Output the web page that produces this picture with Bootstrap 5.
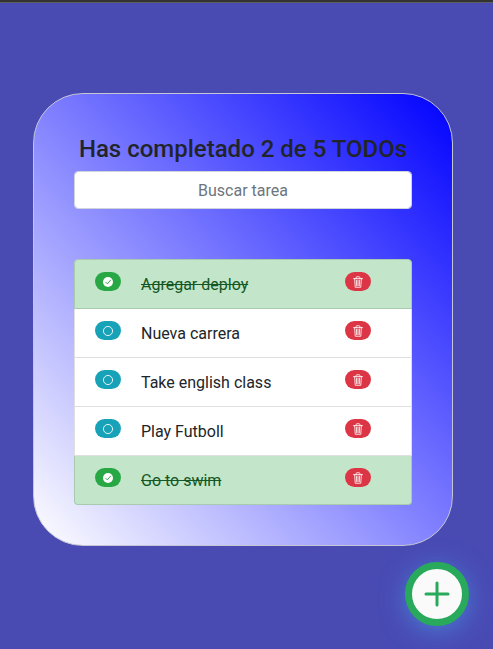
<!DOCTYPE html>
<html lang="es">
<head>
<meta charset="utf-8">
<meta name="viewport" content="width=device-width, initial-scale=1">
<title>TODOs</title>
<link href="https://cdn.jsdelivr.net/npm/bootstrap@5.3.0/dist/css/bootstrap.min.css" rel="stylesheet">
<style>
body { background: #494bb3; color: #212529; font-family: Roboto, "Liberation Sans", sans-serif; border-top: 2px solid #333; }
.page { border-top: 1px solid #5f5f63; padding: 90px 40px 40px 33px; }
.todo-card { max-width: 420px; padding: 40px; border: 1px solid #c5c5d4; border-radius: 50px; background: linear-gradient(to top right, #fff, #00f); }
.todo-title { font-size: 24px; line-height: 31px; margin-bottom: 6px; }
.todo-search { margin-bottom: 50px; padding: 7px 12px 5px; border-color: #ced4da; border-radius: 4px; }
.todo-search::placeholder { color: #6c757d; }
.todo-list { --bs-list-group-border-color: #dfdfdf; --bs-list-group-border-radius: 4px; --bs-list-group-color: #212529; }
.todo-item { padding: 12px 20px 10px; gap: 20px; line-height: 26px; }
.todo-done { background: #c3e6cb; color: #155724; border-color: #a8cbb0; }
.pill { width: 26px; height: 19px; border-radius: 10px; color: #fff; }
.pill svg { width: 10px; height: 10px; }
.pill-done { background: #28a745; }
.pill-open { background: #17a2b8; }
.pill-delete { background: #dc3545; margin-right: 20px; }
.pill-delete svg { width: 12px; height: 12px; }
.add-button { right: 24px; bottom: 23px; width: 64px; height: 64px; border: 7px solid #28a95b; background: #fafafa; color: #28a95b; box-shadow: 0 5px 25px rgba(76,140,225,.7); }
</style>
</head>
<body>
<svg class="d-none" aria-hidden="true">
  <symbol id="check" viewBox="0 0 16 16"><path fill="currentColor" d="M16 8A8 8 0 1 1 0 8a8 8 0 0 1 16 0z"/><path fill="none" stroke="#28a745" stroke-width="1.5" stroke-linecap="round" stroke-linejoin="round" d="M4.5 8.5 7 11l5-6"/></symbol>
  <symbol id="circle" viewBox="0 0 16 16"><circle cx="8" cy="8" r="7.3" fill="none" stroke="currentColor" stroke-width="1.4"/></symbol>
  <symbol id="trash" viewBox="0 0 16 16"><path fill="none" stroke="currentColor" stroke-width="1.1" stroke-linecap="round" stroke-linejoin="round" d="M2 3.5h12M5.5 3.5V2q0-1 1-1h3q1 0 1 1v1.5M3.5 3.5l.8 11.5h7.4l.8-11.5M5.9 5.5l.3 7.5M8 5.5V13M10.1 5.5 9.8 13"/></symbol>
</svg>
<main class="page">
  <section class="todo-card mx-auto">
    <h1 class="todo-title text-center">Has completado 2 de 5 TODOs</h1>
    <input type="text" class="form-control todo-search text-center" placeholder="Buscar tarea" aria-label="Buscar tarea">
    <ul class="list-group todo-list">
      <li class="list-group-item todo-item todo-done d-flex align-items-start">
        <button type="button" class="btn pill pill-done d-flex align-items-center justify-content-center p-0 border-0" aria-label="Desmarcar"><svg><use href="#check"/></svg></button>
        <span class="flex-grow-1"><s>Agregar deploy</s></span>
        <button type="button" class="btn pill pill-delete d-flex align-items-center justify-content-center p-0 border-0" aria-label="Eliminar"><svg><use href="#trash"/></svg></button>
      </li>
      <li class="list-group-item todo-item d-flex align-items-start">
        <button type="button" class="btn pill pill-open d-flex align-items-center justify-content-center p-0 border-0" aria-label="Completar"><svg><use href="#circle"/></svg></button>
        <span class="flex-grow-1">Nueva carrera</span>
        <button type="button" class="btn pill pill-delete d-flex align-items-center justify-content-center p-0 border-0" aria-label="Eliminar"><svg><use href="#trash"/></svg></button>
      </li>
      <li class="list-group-item todo-item d-flex align-items-start">
        <button type="button" class="btn pill pill-open d-flex align-items-center justify-content-center p-0 border-0" aria-label="Completar"><svg><use href="#circle"/></svg></button>
        <span class="flex-grow-1">Take english class</span>
        <button type="button" class="btn pill pill-delete d-flex align-items-center justify-content-center p-0 border-0" aria-label="Eliminar"><svg><use href="#trash"/></svg></button>
      </li>
      <li class="list-group-item todo-item d-flex align-items-start">
        <button type="button" class="btn pill pill-open d-flex align-items-center justify-content-center p-0 border-0" aria-label="Completar"><svg><use href="#circle"/></svg></button>
        <span class="flex-grow-1">Play Futboll</span>
        <button type="button" class="btn pill pill-delete d-flex align-items-center justify-content-center p-0 border-0" aria-label="Eliminar"><svg><use href="#trash"/></svg></button>
      </li>
      <li class="list-group-item todo-item todo-done d-flex align-items-start">
        <button type="button" class="btn pill pill-done d-flex align-items-center justify-content-center p-0 border-0" aria-label="Desmarcar"><svg><use href="#check"/></svg></button>
        <span class="flex-grow-1"><s>Go to swim</s></span>
        <button type="button" class="btn pill pill-delete d-flex align-items-center justify-content-center p-0 border-0" aria-label="Eliminar"><svg><use href="#trash"/></svg></button>
      </li>
    </ul>
  </section>
</main>
<button type="button" class="add-button position-fixed rounded-circle d-flex align-items-center justify-content-center p-0" aria-label="Agregar tarea">
  <svg width="26" height="26" viewBox="0 0 26 26"><path d="M13 2v22M2 13h22" fill="none" stroke="currentColor" stroke-width="3" stroke-linecap="round"/></svg>
</button>
<script src="https://cdn.jsdelivr.net/npm/bootstrap@5.3.0/dist/js/bootstrap.bundle.min.js"></script>
</body>
</html>
